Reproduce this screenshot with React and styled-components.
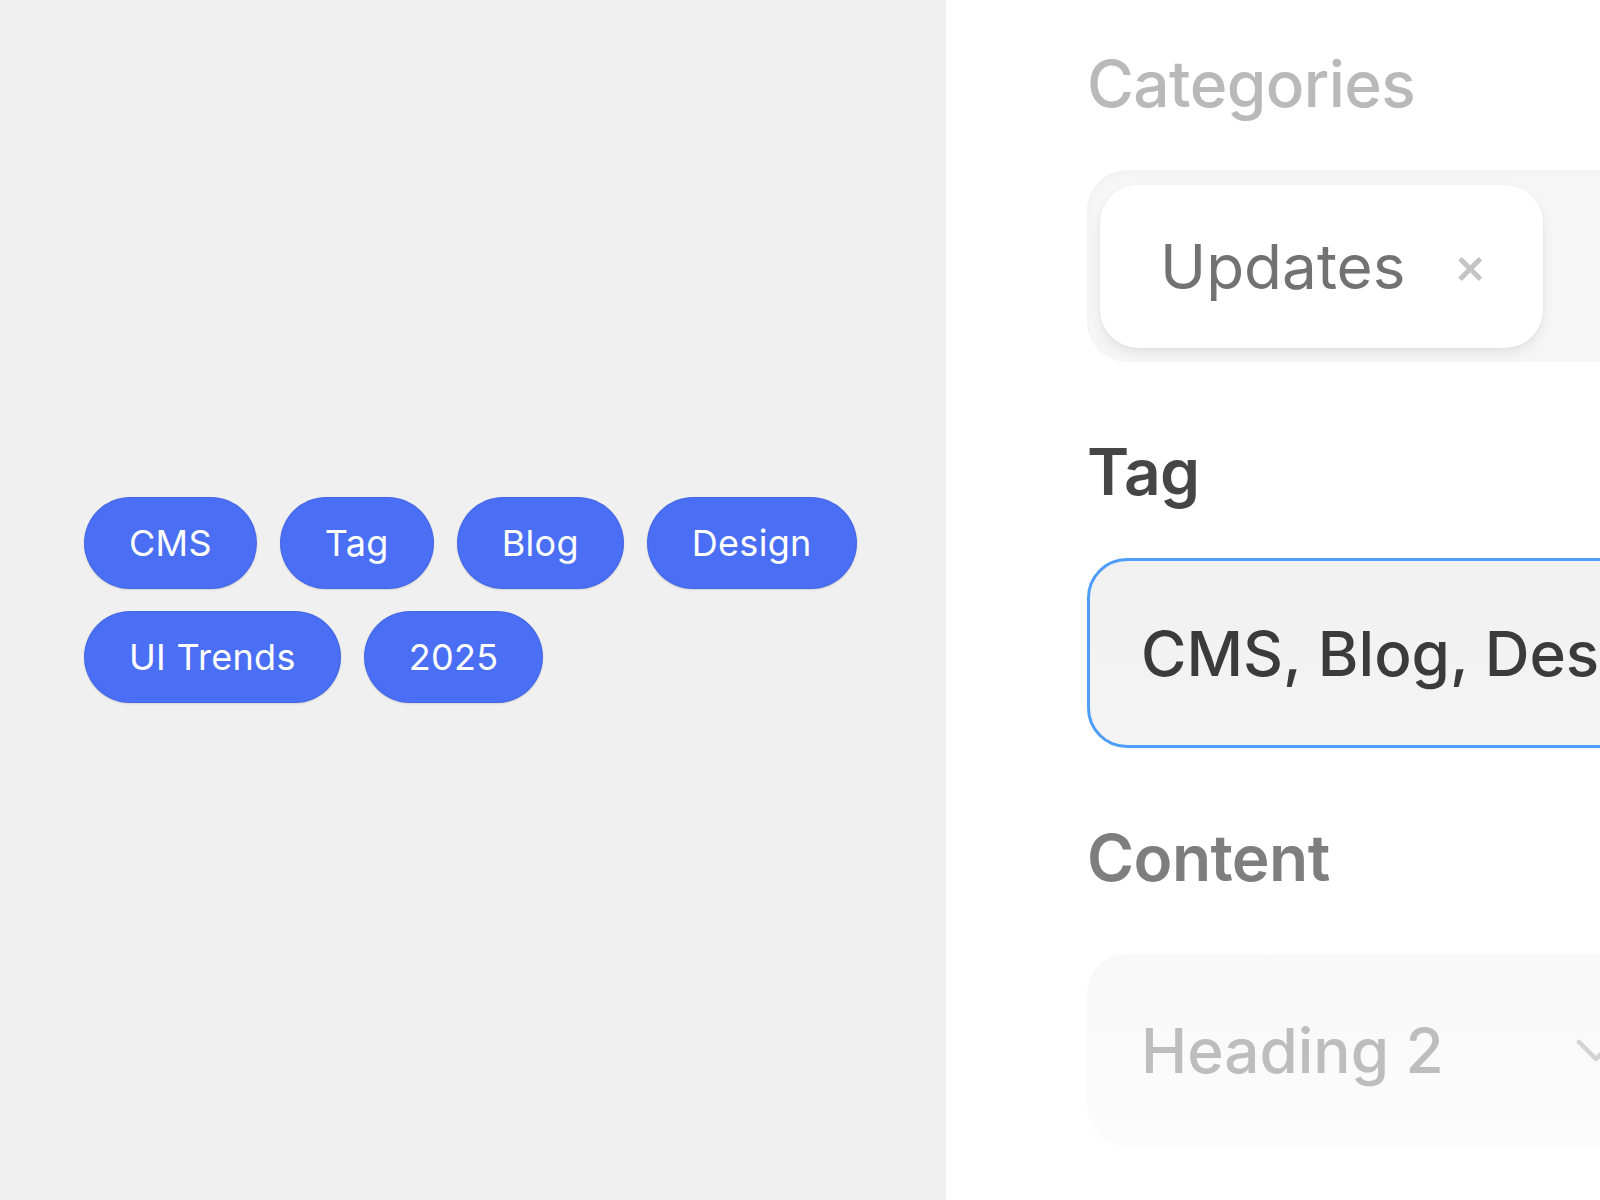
import styled, { createGlobalStyle } from "styled-components";

const GlobalStyle = createGlobalStyle`
  html, body {
    margin: 0;
    padding: 0;
    background: #ffffff;
    font-family: Inter, "Noto Sans", "Liberation Sans", sans-serif;
  }
`;

const tags = ["CMS", "Tag", "Blog", "Design", "UI Trends", "2025"];

const ChevronDown = () => (
  <svg width="40" height="24" viewBox="0 0 40 24" fill="none">
    <path
      d="M3 3 L20 20 L37 3"
      stroke="#d2d2d2"
      strokeWidth="4.5"
      strokeLinecap="round"
      strokeLinejoin="round"
    />
  </svg>
);

const App = () => {
  return (
    <Page>
      <GlobalStyle />
      <Preview>
        <ChipList>
          {tags.map((t) => (
            <Chip key={t}>{t}</Chip>
          ))}
        </ChipList>
      </Preview>

      <Editor>
        <Column>
          <Field>
            <Label $color="#b9b9b9" $weight={500}>
              Categories
            </Label>
            <CategoryBox>
              <CategoryChip>
                <ChipText>Updates</ChipText>
                <Remove>×</Remove>
              </CategoryChip>
            </CategoryBox>
          </Field>

          <Field>
            <Label $color="#464646">Tag</Label>
            <TagInput>CMS, Blog, Design, UI Trends, 2025</TagInput>
          </Field>

          <Field>
            <Label $color="#7e7e7e" $space="64px">
              Content
            </Label>
            <Select>
              <SelectText>Heading 2</SelectText>
              <ChevronDown />
            </Select>
          </Field>
        </Column>
      </Editor>
    </Page>
  );
};

export default App;

const Page = styled.div`
  display: flex;
  width: 100%;
  height: 100vh;
  overflow: hidden;
`;

const Preview = styled.div`
  flex: 0 0 946px;
  height: 100%;
  background: #f0f0f0;
  display: flex;
  align-items: center;
  padding-left: 84px;
  box-sizing: border-box;
`;

const ChipList = styled.div`
  display: flex;
  flex-wrap: wrap;
  gap: 22px 23px;
  max-width: 820px;
`;

const Chip = styled.span`
  display: inline-flex;
  align-items: center;
  height: 92px;
  padding: 0 44px;
  border-radius: 46px;
  background: #4a6ff5;
  border: 1px solid rgba(60, 90, 200, 0.35);
  box-sizing: border-box;
  box-shadow: 0 1px 2px rgba(0, 0, 0, 0.12);
  color: #ffffff;
  font-size: 36px;
  font-weight: 400;
  letter-spacing: 0.3px;
`;

const Editor = styled.div`
  flex: 1;
  min-width: 0;
  overflow: hidden;
  padding: 52px 0 0 141px;
`;

const Column = styled.div`
  width: 760px;
  display: flex;
  flex-direction: column;
  gap: 78px;
`;

const Field = styled.div`
  display: flex;
  flex-direction: column;
`;

const Label = styled.div`
  font-size: 64px;
  line-height: 64px;
  letter-spacing: -0.6px;
  font-weight: ${(p) => p.$weight || 600};
  color: ${(p) => p.$color};
  margin-bottom: ${(p) => p.$space || "54px"};
`;

const CategoryBox = styled.div`
  display: flex;
  padding: 15px 14px 14px 13px;
  border-radius: 40px;
  background: #f6f6f7;
  box-shadow: inset 0 3px 6px rgba(0, 0, 0, 0.025);
`;

const CategoryChip = styled.div`
  display: flex;
  align-items: center;
  gap: 48px;
  height: 163px;
  padding: 0 56px 0 60px;
  box-sizing: border-box;
  border-radius: 38px;
  background: #ffffff;
  box-shadow: 0 6px 12px rgba(0, 0, 0, 0.07), 0 1px 3px rgba(0, 0, 0, 0.04);
`;

const ChipText = styled.span`
  font-size: 62px;
  font-weight: 400;
  color: #727272;
`;

const Remove = styled.span`
  font-size: 50px;
  line-height: 1;
  color: #c4c4c4;
  font-weight: 500;
  margin-top: -4px;
`;

const TagInput = styled.div`
  display: flex;
  align-items: center;
  height: 190px;
  padding-left: 51px;
  box-sizing: border-box;
  border: 3px solid #4d9dfb;
  border-radius: 40px;
  background: linear-gradient(#f1f1f1, #f4f4f4);
  font-size: 62px;
  font-weight: 500;
  color: #3b3b3b;
  white-space: nowrap;
`;

const Select = styled.div`
  display: flex;
  align-items: center;
  gap: 132px;
  height: 193px;
  padding-left: 54px;
  box-sizing: border-box;
  border-radius: 40px;
  background: linear-gradient(#f8f8f8, #fcfcfc);
`;

const SelectText = styled.span`
  font-size: 62px;
  font-weight: 500;
  color: #bdbdbd;
`;
